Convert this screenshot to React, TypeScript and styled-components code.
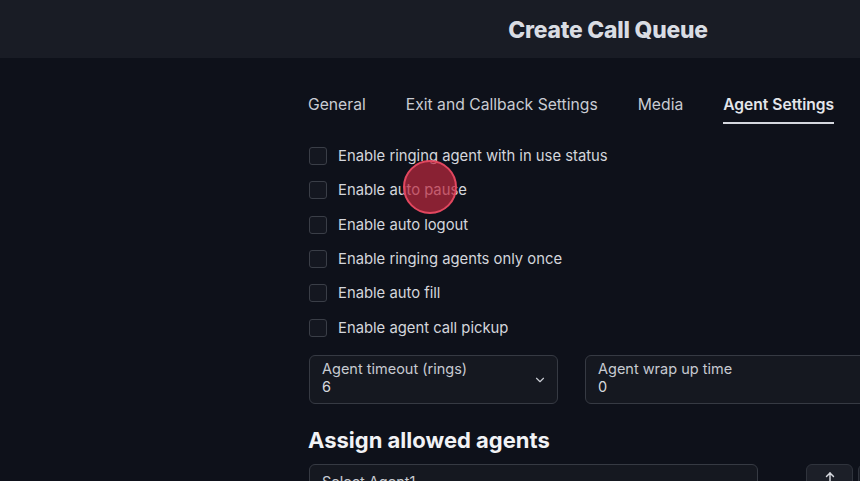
import styled, { createGlobalStyle } from 'styled-components';
import { useState } from 'react';

const GlobalStyle = createGlobalStyle`
  html, body {
    margin: 0;
    padding: 0;
    background: #0e111a;
  }
  body {
    font-family: Inter, "Open Sans", "Liberation Sans", sans-serif;
    color: #d6d8de;
  }
`;

const Page = styled.div`
  width: 860px;
  height: 481px;
  overflow: hidden;
  background: #0e111a;
`;

const Header = styled.header`
  height: 58px;
  background: #191c25;
  display: flex;
  align-items: center;
  justify-content: center;
  padding-left: 356px;
  h1 {
    margin: 0;
    font-size: 22.8px;
    font-weight: 800;
    letter-spacing: -0.2px;
    color: #d9dce3;
  }
`;

const Main = styled.main`
  padding-left: 308px;
  width: 620px;
`;

const Tabs = styled.div`
  display: flex;
  gap: 40px;
  margin-top: 36px;
  > div {
    font-size: 15.7px;
    line-height: 22px;
    color: #c9ccd3;
    padding-bottom: 6px;
    border-bottom: 2px solid transparent;
    cursor: pointer;
    white-space: nowrap;
    &.active {
      font-size: 15.6px;
      font-weight: 600;
      color: #e4e6eb;
      border-bottom-color: #d4d7de;
    }
  }
`;

const CheckList = styled.div`
  margin-top: 15px;
  display: flex;
  flex-direction: column;
`;

const CheckRow = styled.label`
  display: flex;
  align-items: center;
  gap: 11px;
  height: 34.3px;
  font-size: 14.8px;
  color: #d4d6dc;
  padding-left: 1px;
  cursor: pointer;
`;

const Box = styled.span<{ $on: boolean }>`
  width: 16px;
  height: 16px;
  border: 1.5px solid #3a3e47;
  border-radius: 3px;
  background: ${(p) => (p.$on ? '#d4d7de' : '#141720')};
  flex: none;
`;

const FieldRow = styled.div`
  display: flex;
  gap: 27px;
  margin-top: 10px;
  padding-left: 1px;
`;

const Field = styled.div<{ $w: number }>`
  position: relative;
  width: ${(p) => p.$w}px;
  height: 49px;
  box-sizing: border-box;
  border: 1.5px solid #363a43;
  border-radius: 6px;
  background: #151820;
  padding: 4px 12px 0;
  flex: none;
  .label {
    font-size: 14.5px;
    line-height: 18px;
    color: #c7cad1;
  }
  .value {
    font-size: 14.5px;
    line-height: 18px;
    color: #d6d8de;
  }
  svg {
    position: absolute;
    right: 10px;
    top: 17px;
  }
`;

const Heading = styled.h2`
  margin: 22px 0 0;
  font-size: 22px;
  line-height: 28px;
  font-weight: 700;
  color: #f1f2f5;
`;

const AgentRow = styled.div`
  display: flex;
  margin-top: 10px;
  padding-left: 1px;
`;

const AgentSelect = styled.div`
  width: 449px;
  height: 44px;
  box-sizing: border-box;
  border: 1.5px solid #363a43;
  border-radius: 6px;
  background: #151820;
  padding: 8px 12px;
  font-size: 14.5px;
  color: #c7cad1;
`;

const IconButton = styled.button`
  margin-left: 48px;
  width: 47px;
  height: 44px;
  border: 1.5px solid #2f333c;
  border-radius: 6px;
  background: #1c1f28;
  color: #d6d8de;
  display: flex;
  justify-content: center;
  padding-top: 5px;
  flex: none;
`;

const EdgeButton = styled.div`
  margin-left: 5px;
  width: 40px;
  height: 44px;
  border: 1.5px solid #2f333c;
  border-radius: 6px;
  background: #1c1f28;
  flex: none;
`;

const Cursor = styled.div`
  position: absolute;
  left: 403px;
  top: 160px;
  width: 50px;
  height: 50px;
  border-radius: 50%;
  background: rgba(190, 40, 62, 0.7);
  border: 2px solid #e2475f;
  pointer-events: none;
`;

const tabs = ['General', 'Exit and Callback Settings', 'Media', 'Agent Settings'];
const options = [
  'Enable ringing agent with in use status',
  'Enable auto pause',
  'Enable auto logout',
  'Enable ringing agents only once',
  'Enable auto fill',
  'Enable agent call pickup',
];

export default function App() {
  const [currentTab, setCurrentTab] = useState('Agent Settings');
  const [checked, setChecked] = useState<Record<string, boolean>>({});

  return (
    <Page>
      <GlobalStyle />
      <Header>
        <h1>Create Call Queue</h1>
      </Header>
      <Main>
        <Tabs>
          {tabs.map((tab) => (
            <div key={tab} onClick={() => setCurrentTab(tab)} className={currentTab === tab ? 'active' : ''}>
              {tab}
            </div>
          ))}
        </Tabs>
        <CheckList>
          {options.map((opt) => (
            <CheckRow key={opt} onClick={() => setChecked({ ...checked, [opt]: !checked[opt] })}>
              <Box $on={!!checked[opt]} />
              {opt}
            </CheckRow>
          ))}
        </CheckList>
        <FieldRow>
          <Field $w={249}>
            <div className="label">Agent timeout (rings)</div>
            <div className="value">6</div>
            <svg width="14" height="14" viewBox="0 0 24 24" fill="none" stroke="#c7cad1" strokeWidth="2" strokeLinecap="round" strokeLinejoin="round">
              <path d="m6 9 6 6 6-6" />
            </svg>
          </Field>
          <Field $w={320}>
            <div className="label">Agent wrap up time</div>
            <div className="value">0</div>
          </Field>
        </FieldRow>
        <Heading>Assign allowed agents</Heading>
        <AgentRow>
          <AgentSelect>Select Agent1</AgentSelect>
          <IconButton>
            <svg width="14" height="14" viewBox="0 0 24 24" fill="none" stroke="currentColor" strokeWidth="2.5" strokeLinecap="round" strokeLinejoin="round">
              <path d="M12 19V5" />
              <path d="m6 11 6-6 6 6" />
            </svg>
          </IconButton>
          <EdgeButton />
        </AgentRow>
      </Main>
      <Cursor />
    </Page>
  );
}
